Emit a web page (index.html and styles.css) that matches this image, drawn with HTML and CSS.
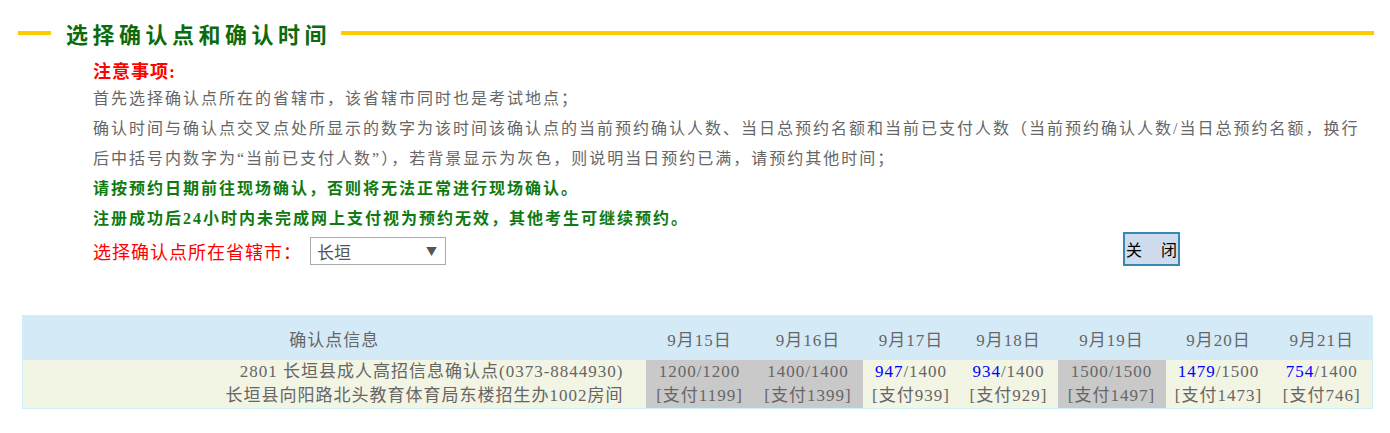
FILE: index.html
```html
<!DOCTYPE html>
<html lang="zh-CN">
<head>
    <meta charset="UTF-8">
    <title>选择确认点和确认时间</title>
    <link rel="stylesheet" href="styles.css">
</head>
<body>
    <div class="page">
        <!-- 标题 -->
        <div class="titleRow">
            <span class="titleLine short"></span>
            <h2 class="title">选择确认点和确认时间</h2>
            <span class="titleLine long"></span>
        </div>

        <!-- 注意事项 -->
        <div class="notes">
            <div class="notesHead">注意事项:</div>
            <p>首先选择确认点所在的省辖市，该省辖市同时也是考试地点；</p>
            <p>确认时间与确认点交叉点处所显示的数字为该时间该确认点的当前预约确认人数、当日总预约名额和当前已支付人数（当前预约确认人数/当日总预约名额，换行后中括号内数字为“当前已支付人数”），若背景显示为灰色，则说明当日预约已满，请预约其他时间；</p>
            <p class="warn">请按预约日期前往现场确认，否则将无法正常进行现场确认。</p>
            <p class="warn">注册成功后24小时内未完成网上支付视为预约无效，其他考生可继续预约。</p>
            <div class="pickRow">
                <div class="pick">
                    <span class="pickLabel">选择确认点所在省辖市：</span>
                    <div class="fakeSelect">
                        <span>长垣</span>
                        <span class="arrow">▼</span>
                    </div>
                </div>
                <span class="closeBtn"><span>关</span><span>闭</span></span>
            </div>
        </div>

        <!-- 确认点列表 -->
        <table class="siteTable">
            <colgroup>
                <col class="wInfo">
                <col class="w108">
                <col class="w109">
                <col class="w97">
                <col class="w98">
                <col class="w108">
                <col class="w106">
                <col class="w101">
            </colgroup>
            <thead>
                <tr>
                    <th>确认点信息</th>
                    <th>9月15日</th>
                    <th>9月16日</th>
                    <th>9月17日</th>
                    <th>9月18日</th>
                    <th>9月19日</th>
                    <th>9月20日</th>
                    <th>9月21日</th>
                </tr>
            </thead>
            <tbody>
                <tr>
                    <td class="info">2801 长垣县成人高招信息确认点(0373-8844930)<br>长垣县向阳路北头教育体育局东楼招生办1002房间</td>
                    <td class="full">1200/1200<br>[支付1199]</td>
                    <td class="full">1400/1400<br>[支付1399]</td>
                    <td><span class="num">947</span>/1400<br>[支付939]</td>
                    <td><span class="num">934</span>/1400<br>[支付929]</td>
                    <td class="full">1500/1500<br>[支付1497]</td>
                    <td><span class="num">1479</span>/1500<br>[支付1473]</td>
                    <td><span class="num">754</span>/1400<br>[支付746]</td>
                </tr>
            </tbody>
        </table>
    </div>
</body>
</html>
```

FILE: styles.css
```css
* {
    padding: 0;
    margin: 0;
}
body {
    background: #fff;
    font-family: "Liberation Serif", "Noto Sans CJK SC", serif;
}
.page {
    width: 1356px;
    padding: 18px 0 0 18px;
}
.titleRow {
    display: flex;
    align-items: center;
    height: 30px;
}
.titleLine {
    height: 4px;
    background-color: #ffcc00;
}
.short {
    width: 33px;
}
.long {
    flex: 1;
}
.title {
    margin: 0 10px 0 15px;
    font-family: "Noto Sans CJK SC", sans-serif;
    font-size: 22px;
    font-weight: 700;
    letter-spacing: 4.5px;
    line-height: 30px;
    color: #0d6b0d;
}
.notes {
    width: 1275px;
    margin: 12px 0 0 75px;
    font-size: 16px;
    letter-spacing: 2px;
    color: #666;
}
.notesHead {
    font-size: 18px;
    font-weight: bold;
    letter-spacing: 1px;
    line-height: 24px;
    color: #ff0000;
}
.notes p {
    line-height: 30px;
}
.notes .warn {
    font-weight: bold;
    color: #107a10;
}
.pickRow {
    display: grid;
    grid-template-columns: 1030px auto;
    align-items: center;
    height: 34px;
}
.pick {
    display: flex;
    align-items: center;
}
.pickLabel {
    font-size: 18px;
    letter-spacing: 1px;
    color: #ff0000;
}
.fakeSelect {
    display: flex;
    justify-content: space-between;
    align-items: center;
    box-sizing: border-box;
    width: 136px;
    height: 28px;
    margin-left: 8px;
    padding: 0 8px 0 6px;
    border: 1px solid #aaa;
    font-family: "Noto Sans CJK SC", sans-serif;
    font-size: 17px;
    letter-spacing: 0;
    color: #555;
}
.arrow {
    font-size: 11px;
    color: #555;
}
.closeBtn {
    display: flex;
    justify-content: space-between;
    align-items: center;
    box-sizing: border-box;
    width: 57px;
    height: 34px;
    margin-top: -4px;
    padding: 0 1px;
    border: 2px solid #3a86b4;
    background-color: #cfdcee;
    font-family: "Noto Sans CJK SC", sans-serif;
    font-size: 16px;
    letter-spacing: 0;
    color: #000;
}
.siteTable {
    width: 1350px;
    margin: 47px 0 0 4px;
    table-layout: fixed;
    border-collapse: collapse;
    border: 1px solid #cdeff7;
    font-size: 17px;
    letter-spacing: 1px;
    color: #666;
}
.wInfo { width: 623px; }
.w108 { width: 108px; }
.w109 { width: 109px; }
.w97 { width: 97px; }
.w98 { width: 98px; }
.w106 { width: 106px; }
.w101 { width: 101px; }
.siteTable th {
    height: 44px;
    font-weight: normal;
    background-color: #d5eaf7;
}
.siteTable td {
    padding: 0;
    line-height: 24px;
    text-align: center;
    white-space: nowrap;
    background-color: #f2f4e4;
}
.siteTable td.info {
    padding-right: 22px;
    text-align: right;
}
.siteTable td.full {
    background-color: #c9c9c9;
}
.num {
    color: #0000ff;
}
```
